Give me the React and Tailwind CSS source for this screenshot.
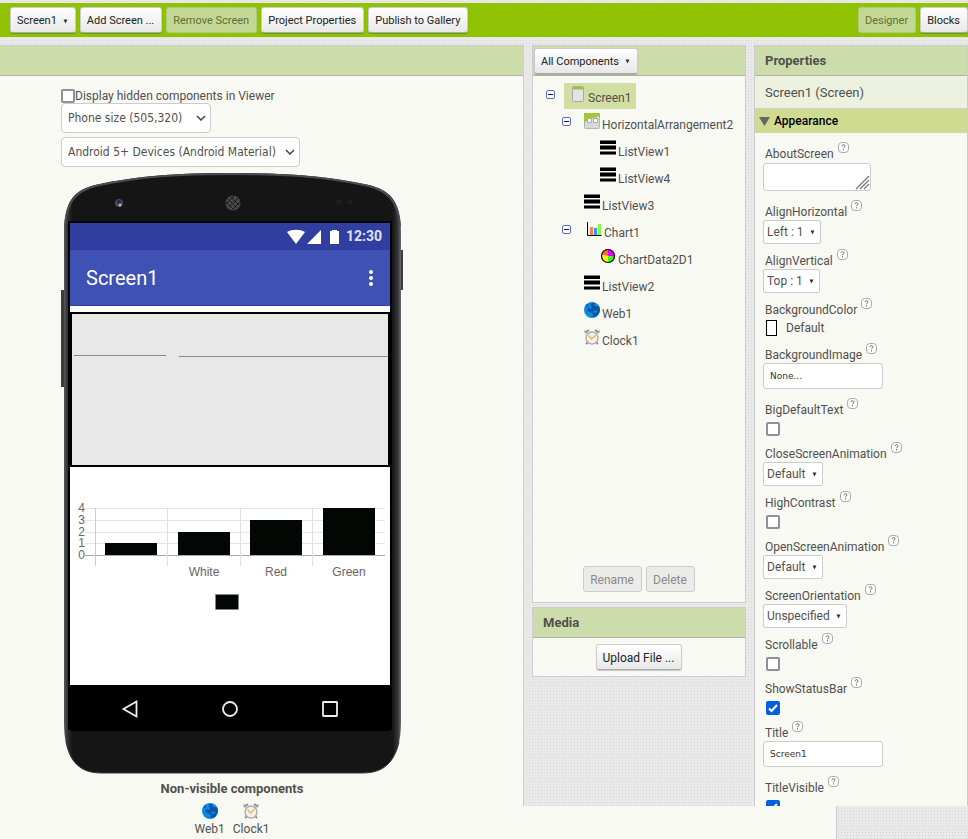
import React from "react";

const TEXTURE =
  "bg-[#e9e9e9] bg-[radial-gradient(circle,#d6d6d6_0.7px,transparent_1px)] bg-[length:3px_3px]";

const BTN =
  "h-[26px] rounded-[3px] border pt-[2px] pr-[7px] pl-[6px] leading-[16px] whitespace-nowrap";
const BTN_LIGHT =
  "border-[#ccc] border-b-[#aaa] bg-linear-to-b from-white to-[#e8e8e8] text-[#222] shadow-[0_1px_1px_rgba(0,0,0,0.2)]";
const BTN_GREEN = "border-[#b2cb7a] bg-[#c3d895] text-[#5d7233]";
const BTN_DISABLED = "border-[#ccc] bg-[#ebebe9] text-[#8a8a8a]";

function Caret() {
  return (
    <svg width="5" height="5" viewBox="0 0 5 5" className="shrink-0">
      <path d="M0.500 0.5h4L2.500 4.5z" fill="#333" />
    </svg>
  );
}

function ScreenIcon() {
  return (
    <svg width="18" height="16" viewBox="0 0 18 16">
      <rect x="4.5" y="0.5" width="11" height="15" rx="1" fill="#e3e3e3" stroke="#aaa" />
      <path d="M5 1h10v2.5H5z" fill="#a5c034" />
    </svg>
  );
}

function ArrangementIcon() {
  return (
    <svg width="16" height="16" viewBox="0 0 16 16">
      <rect x="0.5" y="0.5" width="15" height="15" rx="1" fill="#d8d8d8" stroke="#b4b4b4" />
      <path d="M0 0h16v3C11 4 5 6 0 10z" fill="#a6c63a" />
      <rect x="3.5" y="5.5" width="4" height="4" rx="0.5" fill="#fff" stroke="#aaa" />
      <rect x="9.5" y="5.5" width="4" height="4" rx="0.5" fill="#fff" stroke="#aaa" />
    </svg>
  );
}

function ListIcon() {
  return (
    <svg width="16" height="16" viewBox="0 0 16 16">
      <path d="M0 1h16v3H0zM0 6h16v3H0zM0 12h16v2H0z" fill="#000" />
      <path d="M0 0.5h16M0 5.5h16M0 9.5h16M0 11.500h16M0 14.5h16" stroke="#777" />
    </svg>
  );
}

function ChartIcon() {
  return (
    <svg width="18" height="16" viewBox="0 0 18 16">
      <path d="M6 6h3v8H6z" fill="#ff8040" />
      <path d="M10 7h3v7h-3z" fill="#3a92ff" />
      <path d="M14 3h3v11h-3z" fill="#80ff40" />
      <path d="M3.5 1v13.500h14" fill="none" stroke="#000" />
    </svg>
  );
}

function DataIcon() {
  return (
    <svg width="16" height="16" viewBox="0 0 16 16">
      <path d="M8 8L8 1A7 7 0 0 0 1 7z" fill="#ff6a1e" />
      <path d="M8 8L8 1A7 7 0 0 1 15 9z" fill="#e800ff" />
      <path d="M8 8l7 1a7 7 0 0 1-8 6z" fill="#3dff14" />
      <path d="M8 8l-1 7A7 7 0 0 1 1 7z" fill="#ffee12" />
      <circle cx="8" cy="8" r="6.500" fill="none" stroke="#111" strokeWidth="1.2" />
    </svg>
  );
}

function WebIcon() {
  return (
    <svg width="16" height="16" viewBox="0 0 16 16">
      <circle cx="8" cy="8" r="8" fill="#0a8be0" />
      <path
        d="M8 0.500l3 1-1 1.500 2 1.500 3-.5a8 8 0 0 1-4 11l-3-.5 1.500-2-2-1.500L4 9.500 3 7.500l2-1.500 2 1 1-2-1.500-2zM2 3l2-1 0 2-2 1.500z"
        fill="#0b55a8"
      />
      <path d="M9 9l3-1 2 1-2 2-3 0z" fill="#1478cc" />
    </svg>
  );
}

function ClockIcon() {
  return (
    <svg width="16" height="16" viewBox="0 0 16 16">
      <path d="M1 4l4-3M15 4l-4-3M4 13l-2 2M12 13l2 2" stroke="#909090" strokeWidth="2" />
      <path d="M0 2h3M13 2h3M3 4l2 2M13 4l-2 2" stroke="#a5a5a5" />
      <circle cx="8" cy="9" r="6" fill="#f0f0f0" stroke="#aeaeae" strokeWidth="1.4" />
      <path d="M4.500 6.500L7.500 10 12 6" fill="none" stroke="#f4b45a" strokeWidth="1.500" />
    </svg>
  );
}

const TREE = [
  { name: "Screen1", Icon: ScreenIcon, indent: "pl-[13px]", toggle: true, selected: true },
  { name: "HorizontalArrangement2", Icon: ArrangementIcon, indent: "pl-[29px]", toggle: true },
  { name: "ListView1", Icon: ListIcon, indent: "pl-[45px]" },
  { name: "ListView4", Icon: ListIcon, indent: "pl-[45px]" },
  { name: "ListView3", Icon: ListIcon, indent: "pl-[29px]" },
  { name: "Chart1", Icon: ChartIcon, indent: "pl-[29px]", toggle: true },
  { name: "ChartData2D1", Icon: DataIcon, indent: "pl-[45px]" },
  { name: "ListView2", Icon: ListIcon, indent: "pl-[29px]" },
  { name: "Web1", Icon: WebIcon, indent: "pl-[29px]" },
  { name: "Clock1", Icon: ClockIcon, indent: "pl-[29px]" },
];

function TreeRow({ name, Icon, indent, toggle, selected }) {
  return (
    <li className={`flex h-[27px] items-start ${indent}`}>
      <span className="flex w-[18px] shrink-0 pt-[7px]">
        {toggle && (
          <button type="button" aria-label={`Collapse ${name}`} className="block">
            <svg width="9" height="9" viewBox="0 0 9 9">
              <rect x="0.5" y="0.5" width="8" height="8" rx="1.500" fill="#fff" stroke="#5a6fb5" />
              <path d="M2 4.500h5" stroke="#00a" />
            </svg>
          </button>
        )}
      </span>
      <a
        href="#"
        className={`flex h-[26px] items-start gap-[2px] pt-[3px] pr-[5px] pl-[4px] ${selected ? "bg-[#d2dfa2]" : ""}`}
      >
        <Icon />
        <span className="pt-[4px] leading-[16px]">{name}</span>
      </a>
    </li>
  );
}

function Check({ id, checked }) {
  return (
    <span className="relative block size-[14px]">
      <input
        id={id}
        type="checkbox"
        defaultChecked={checked}
        className="peer block size-[14px] appearance-none rounded-[2px] border-2 border-[#8f8f9d] bg-white checked:border-[#0060df] checked:bg-[#0060df]"
      />
      <svg
        viewBox="0 0 14 14"
        className="pointer-events-none absolute inset-0 hidden size-[14px] peer-checked:block"
      >
        <path d="M3 7.500L5.500 10 11 4" fill="none" stroke="#fff" strokeWidth="2" />
      </svg>
    </span>
  );
}

const FIELDS = [
  { name: "AboutScreen", kind: "area" },
  { name: "AlignHorizontal", kind: "select", value: "Left : 1" },
  { name: "AlignVertical", kind: "select", value: "Top : 1" },
  { name: "BackgroundColor", kind: "color", value: "Default" },
  { name: "BackgroundImage", kind: "text", value: "None..." },
  { name: "BigDefaultText", kind: "check" },
  { name: "CloseScreenAnimation", kind: "select", value: "Default" },
  { name: "HighContrast", kind: "check" },
  { name: "OpenScreenAnimation", kind: "select", value: "Default" },
  { name: "ScreenOrientation", kind: "select", value: "Unspecified" },
  { name: "Scrollable", kind: "check" },
  { name: "ShowStatusBar", kind: "check", checked: true },
  { name: "Title", kind: "text", value: "Screen1" },
  { name: "TitleVisible", kind: "check", checked: true },
];

function Control({ field }) {
  const { name, kind, value, checked } = field;
  if (kind === "area")
    return (
      <div className="pt-px pb-[9px]">
        <span className="relative block h-[28px] w-[108px]">
          <textarea
            id={name}
            className="block h-full w-full resize-none rounded-[3px] border border-[#ccc] bg-white"
          />
          <svg width="15" height="15" viewBox="0 0 15 15" className="absolute right-px bottom-px">
            <path d="M1 14L14 1M5 14l9-9M9 14l5-5" stroke="#777" strokeWidth="1.300" />
          </svg>
        </span>
      </div>
    );
  if (kind === "select")
    return (
      <div className="pb-[5px]">
        <span className="relative inline-flex items-center align-top">
          <select
            id={name}
            className="h-6 appearance-none rounded-[2px] border border-[#ccc] bg-white pr-4 pl-[3px]"
          >
            <option>{value}</option>
          </select>
          <span className="pointer-events-none absolute right-[6px]">
            <Caret />
          </span>
        </span>
      </div>
    );
  if (kind === "color")
    return (
      <div className="pt-[2px] pb-[7px]">
        <button id={name} type="button" className="flex h-4 items-center gap-[9px] pl-[3px]">
          <span className="block h-4 w-[11px] border border-black bg-white" />
          {value}
        </button>
      </div>
    );
  if (kind === "text")
    return (
      <div className="pb-[9px]">
        <input
          id={name}
          defaultValue={value}
          className="block h-[26px] w-[120px] rounded-[3px] border border-[#ccc] bg-white px-[6px] font-['DejaVu_Sans',sans-serif] text-[9px] text-[#333]"
        />
      </div>
    );
  return (
    <div className="pt-1 pb-[6px] pl-[3px]">
      <Check id={name} checked={checked} />
    </div>
  );
}

function Field({ field }) {
  return (
    <div>
      <div className="flex h-[20px] items-start gap-1 pl-[2px]">
        <label htmlFor={field.name} className="pt-[4px] leading-[16px]">
          {field.name}
        </label>
        <button type="button" aria-label={`Help for ${field.name}`} className="block">
          <svg width="11" height="11" viewBox="0 0 11 11">
            <rect x="0.5" y="0.5" width="10" height="10" rx="3.500" fill="#fff" stroke="#aaa" />
            <path
              d="M4 4.200c0-2 3-2 3-.2 0 1-1.500 1-1.500 2.200M5.500 7.200v1.200"
              fill="none"
              stroke="#666"
            />
          </svg>
        </button>
      </div>
      <Control field={field} />
    </div>
  );
}

function ViewerSelect({ label, value, width }) {
  return (
    <span className={`relative flex items-center ${width}`}>
      <select
        aria-label={label}
        className="h-[30px] w-full appearance-none rounded-[4px] border border-[#ccc] bg-white pl-[6px] font-['DejaVu_Sans_Condensed','DejaVu_Sans',sans-serif] text-[12px]"
      >
        <option>{value}</option>
      </select>
      <svg
        width="10"
        height="6"
        viewBox="0 0 10 6"
        className="pointer-events-none absolute right-[5px]"
      >
        <path d="M1 1l4 4 4-4" fill="none" stroke="#444" strokeWidth="1.500" />
      </svg>
    </span>
  );
}

const BARS = [
  { label: "", value: 1, x: 35 },
  { label: "White", value: 2, x: 108 },
  { label: "Red", value: 3, x: 180 },
  { label: "Green", value: 4, x: 253 },
];
const LEVELS = [
  { value: 4, y: 41 },
  { value: 3, y: 53 },
  { value: 2, y: 65 },
  { value: 1, y: 76 },
  { value: 0, y: 88 },
];

function BarChart() {
  return (
    <svg
      width="320"
      height="218"
      viewBox="0 0 320 218"
      className="block font-['Liberation_Sans',sans-serif] text-[12px]"
    >
      {LEVELS.map((l) => (
        <g key={l.value}>
          <path d={`M15 ${l.y + 0.5}H315`} stroke={l.value ? "#e5e5e5" : "#aaa"} />
          <text x="15" y={l.y + 4} textAnchor="end" fill="#666">
            {l.value}
          </text>
        </g>
      ))}
      <path d="M25.500 41v58" stroke="#ccc" />
      <path d="M97.500 41v58M170.500 41v58M242.500 41v58" stroke="#e0e0e0" />
      {BARS.map((b) => {
        const top = LEVELS[4 - b.value].y;
        return (
          <g key={b.x}>
            <rect x={b.x} y={top} width="52" height={88 - top} fill="#020703" />
            <text x={b.x + 26} y="109" textAnchor="middle" fill="#666">
              {b.label}
            </text>
          </g>
        );
      })}
      <rect x="145.500" y="127.500" width="23" height="15" fill="#020703" stroke="#888" strokeWidth="0.5" />
    </svg>
  );
}

function PhoneFrame() {
  return (
    <svg
      width="342"
      height="603"
      viewBox="0 0 342 603"
      className="pointer-events-none absolute inset-0"
    >
      <defs>
        <linearGradient id="edge" x1="0" x2="1">
          <stop offset="0" stopColor="#55575a" />
          <stop offset="0.012" stopColor="#2c2d2e" />
          <stop offset="0.025" stopColor="#151515" />
          <stop offset="0.975" stopColor="#151515" />
          <stop offset="0.99" stopColor="#333437" />
          <stop offset="1" stopColor="#6a6b70" />
        </linearGradient>
      </defs>
      <path d="M0 118h4v97H0zM339 78h3v40h-3z" fill="#3c3c3e" />
      <path
        d="M3 60C3 28 14 18 34 13 80 3 120 1 171 1s91 2 137 12c20 5 32 15 32 47v490c0 34-13 51-38 51H40C14 601 3 584 3 550z"
        fill="url(#edge)"
      />
      <path
        d="M4 54C6 28 16 19 34 14 80 4 120 2 171 2s91 2 137 12c18 5 29 14 31 40"
        fill="none"
        stroke="#4c4d50"
        strokeWidth="2"
      />
      <path d="M5 570c5 21 15 31 35 31h262c20 0 31-10 36-31" fill="none" stroke="#3b3c3e" />
      <circle cx="58" cy="31" r="4" fill="#4b4b50" />
      <circle cx="58" cy="30" r="2" fill="#23236a" />
      <circle cx="59" cy="33" r="1.500" fill="#b8b8bc" />
      <circle cx="172" cy="31" r="7.500" fill="#484848" />
      <path
        d="M167 27l9 9M170 25l8 8M165 30l8 8M177 26l-9 9M179 30l-7 7M173 24l-8 8"
        stroke="#111"
        strokeWidth="0.8"
      />
      <circle cx="278" cy="30" r="3" fill="#1d1d1d" />
      <circle cx="289" cy="30" r="2.500" fill="#1d1d1d" />
      <path d="M7 49h324v509H7z" fill="#000" />
    </svg>
  );
}

function Phone() {
  return (
    <div className="relative h-[603px] w-[342px] pt-[51px] pl-[9px]">
      <PhoneFrame />
      <div className="relative w-[320px]">
        <div className="flex h-[27px] items-center justify-end gap-[5px] bg-[#303f9f] pr-2 text-[14px] font-bold text-[#dfe3f5]">
          <svg width="54" height="16" viewBox="0 0 54 16" fill="#fff">
            <path d="M0 3C5 0 13 0 18 3L9 15zM20 15L34 1v14zM43 2h2V1h5v1h2v13h-9z" />
          </svg>
          12:30
        </div>
        <div className="flex h-[56px] items-center justify-between border-b border-[#3543a0] bg-[#3f51b5] pr-4 pl-4 text-[20px] text-white">
          Screen1
          <button type="button" aria-label="Menu" className="flex w-[6px] flex-col items-center gap-[2px]">
            <span className="size-[4px] rounded-full bg-white" />
            <span className="size-[4px] rounded-full bg-white" />
            <span className="size-[4px] rounded-full bg-white" />
          </button>
        </div>
        <div className="bg-white pt-[6px]">
          <div className="flex h-[155px] gap-[13px] border-2 border-black bg-[#e8e8e8] pl-[2px]">
            <div className="h-[42px] w-[92px] border-b border-[#888]" />
            <div className="h-[43px] flex-1 border-b border-[#888]" />
          </div>
          <BarChart />
        </div>
        <div className="flex h-[46px] items-center justify-between bg-black px-[50px] pt-[2px]">
          <button type="button" aria-label="Back">
            <svg width="20" height="20" viewBox="0 0 20 20" fill="none" stroke="#eee" strokeWidth="1.800">
              <path d="M16.500 2.500v15L3.500 10z" />
            </svg>
          </button>
          <button type="button" aria-label="Home">
            <svg width="20" height="20" viewBox="0 0 20 20" fill="none" stroke="#eee" strokeWidth="1.800">
              <circle cx="10" cy="10" r="7" />
            </svg>
          </button>
          <button type="button" aria-label="Recent">
            <svg width="20" height="20" viewBox="0 0 20 20" fill="none" stroke="#eee" strokeWidth="1.800">
              <rect x="3" y="3" width="14" height="14" rx="0.5" />
            </svg>
          </button>
        </div>
      </div>
    </div>
  );
}

const HEADER =
  "flex h-[31px] shrink-0 items-center border-t border-t-[#ccc] border-b border-b-[#b0b3a6] bg-[#ccdcaa] text-[13px] font-bold";

export default function App() {
  return (
    <div
      className={`flex h-screen flex-col overflow-hidden pt-[3px] font-[Roboto,sans-serif] text-[12px] text-[#505050] ${TEXTURE}`}
    >
      <header className="mb-2 flex h-[34px] shrink-0 items-center gap-1 bg-[#8fc202] pl-[10px] text-[11px]">
        <button type="button" className={`flex items-center gap-[6px] ${BTN} ${BTN_LIGHT}`}>
          Screen1 <Caret />
        </button>
        <button type="button" className={`${BTN} ${BTN_LIGHT}`}>Add Screen ...</button>
        <button type="button" disabled className={`${BTN} ${BTN_GREEN}`}>Remove Screen</button>
        <button type="button" className={`${BTN} ${BTN_LIGHT}`}>Project Properties</button>
        <button type="button" className={`${BTN} ${BTN_LIGHT}`}>Publish to Gallery</button>
        <button type="button" disabled className={`ml-auto ${BTN} ${BTN_GREEN}`}>Designer</button>
        <button type="button" className={`${BTN} ${BTN_LIGHT}`}>Blocks</button>
      </header>

      <div className="flex min-h-0 flex-1">
        <main className="min-w-0 flex-1 bg-[#f8f9f2]">
          <div className={HEADER} />
          <div className="pt-3 pl-[61px]">
            <div className="flex h-[15px] items-center">
              <Check id="hidden-components" />
              <label htmlFor="hidden-components">Display hidden components in Viewer</label>
            </div>
            <div className="flex flex-col gap-1">
              <ViewerSelect label="Phone size" value="Phone size (505,320)" width="w-[150px]" />
              <ViewerSelect
                label="Theme"
                value="Android 5+ Devices (Android Material)"
                width="w-[239px]"
              />
            </div>
            <div className="w-[342px] pt-[5px]">
              <Phone />
              <section className="flex flex-col items-center pt-[5px]">
                <h2 className="text-[13px] leading-[18px] font-bold">Non-visible components</h2>
                <div className="flex gap-2 pt-[5px]">
                  <a href="#" className="flex flex-col items-center gap-[2px] leading-[16px]">
                    <WebIcon />
                    Web1
                  </a>
                  <a href="#" className="flex flex-col items-center gap-[2px] leading-[16px]">
                    <ClockIcon />
                    Clock1
                  </a>
                </div>
              </section>
            </div>
          </div>
        </main>

        <div className="flex w-[445px] shrink-0 flex-col">
          <div className="flex min-h-0 flex-1 gap-2 overflow-hidden border-l border-[#ccc] pl-2">
            <div className="flex w-[214px] flex-col gap-1">
              <section className="flex h-[558px] flex-col border border-t-0 border-[#ccc] bg-[#f8f9f2]">
                <div className={`${HEADER} pl-px`}>
                  <button
                    type="button"
                    className={`flex items-center gap-[6px] text-[11px] font-normal ${BTN} ${BTN_LIGHT}`}
                  >
                    All Components <Caret />
                  </button>
                </div>
                <ul className="flex-1 pt-[7px]">
                  {TREE.map((t) => (
                    <TreeRow key={t.name} {...t} />
                  ))}
                </ul>
                <div className="flex justify-center gap-1 pb-[10px]">
                  <button type="button" disabled className={`${BTN} ${BTN_DISABLED}`}>
                    Rename
                  </button>
                  <button type="button" disabled className={`${BTN} ${BTN_DISABLED}`}>
                    Delete
                  </button>
                </div>
              </section>
              <section className="border border-t-0 border-[#ccc] bg-[#f8f9f2]">
                <h2 className={`${HEADER} pl-[10px]`}>Media</h2>
                <div className="flex justify-center py-[6px]">
                  <button type="button" className={`${BTN} ${BTN_LIGHT}`}>Upload File ...</button>
                </div>
              </section>
            </div>

            <section className="w-[214px] border-x border-[#ccc] bg-[#f8f9f2]">
              <h2 className={`${HEADER} pl-[10px]`}>Properties</h2>
              <p className="flex h-[32px] items-center bg-[#ecf1e0] pt-[2px] pl-[10px] text-[13px]">
                Screen1 (Screen)
              </p>
              <button
                type="button"
                aria-expanded="true"
                className="flex h-[25px] w-full items-center gap-[4px] border-t border-[#ccc] bg-[#cfdb91] pl-[4px] font-medium text-black"
              >
                <svg width="11" height="9" viewBox="0 0 11 9">
                  <path d="M0 0h11L5.500 9z" fill="#666" />
                </svg>
                Appearance
              </button>
              <div className="pt-[9px] pl-2">
                {FIELDS.map((f) => (
                  <Field key={f.name} field={f} />
                ))}
              </div>
            </section>
          </div>
          <div className="flex h-[33px] shrink-0">
            <div className="w-[314px] border-r border-[#ccc] bg-[#f8f9f2]" />
          </div>
        </div>
      </div>
    </div>
  );
}
